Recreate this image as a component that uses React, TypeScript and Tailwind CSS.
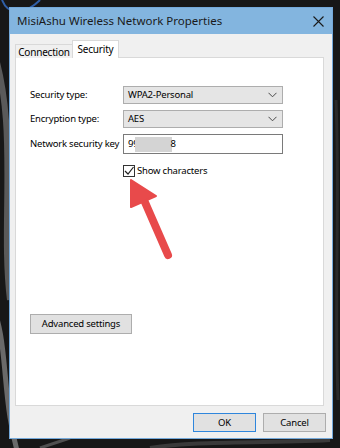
import React from "react";

const font = { fontFamily: '"Noto Sans", "Liberation Sans", sans-serif' };

function Chevron() {
  return (
    <svg width="9" height="6" viewBox="0 0 9 6" className="text-[#4a4a4a]">
      <path d="M0.5 0.8 L4.5 4.8 L8.5 0.8" fill="none" stroke="currentColor" strokeWidth="1" />
    </svg>
  );
}

function Select({ value }: { value: string }) {
  return (
    <div className="flex h-[18px] w-[160px] items-center justify-between border border-[#adadad] bg-[#e5e5e5] pl-[4px] pr-[5px]">
      <span>{value}</span>
      <Chevron />
    </div>
  );
}

function Row({ label, children }: { label: string; children: React.ReactNode }) {
  return (
    <div className="flex items-center">
      <span className="w-[93px] shrink-0 whitespace-nowrap">{label}</span>
      {children}
    </div>
  );
}

export default function App() {
  return (
    <div
      className="relative h-[448px] w-[340px] overflow-hidden bg-[#171717] text-[9.5px] leading-none tracking-[-0.2px] text-black"
      style={font}
    >
      {/* desktop wallpaper streaks */}
      <svg className="absolute inset-0" width="340" height="448" viewBox="0 0 340 448">
        <path d="M-10 40 C 20 120, 0 220, 10 300" stroke="#5a5a5a" strokeWidth="6" fill="none" />
        <path d="M-10 300 C 10 340, 0 400, 20 460" stroke="#6a6a6a" strokeWidth="5" fill="none" />
        <path d="M2 0 C 10 20, 30 10, 40 0" stroke="#2f5fa8" strokeWidth="2" fill="none" />
        <path d="M150 448 C 200 440, 260 444, 330 440" stroke="#3a3a3a" strokeWidth="4" fill="none" />
        <path d="M40 448 L 70 438" stroke="#505050" strokeWidth="3" fill="none" />
        <path d="M336 100 C 340 200, 334 300, 338 400" stroke="#2a2a2a" strokeWidth="3" fill="none" />
      </svg>

      {/* dialog window */}
      <div className="absolute left-[9px] top-[7px] flex h-[432px] w-[324px] flex-col border border-[#74a9da] bg-[#f0f0f0]">
        <div className="flex h-[26px] shrink-0 items-center justify-between bg-[#83b5df] pl-[7px] pr-[8px]">
          <span className="text-[11.5px] tracking-normal text-[#1a1a1a]">MisiAshu Wireless Network Properties</span>
          <svg width="11" height="11" viewBox="0 0 11 11">
            <path d="M0.5 0.5 L10.5 10.5 M10.5 0.5 L0.5 10.5" stroke="#1a1a1a" strokeWidth="1.1" />
          </svg>
        </div>

        <div className="flex flex-1 flex-col pl-[5px] pr-[8px] pt-[7px]">
          {/* tabs */}
          <div className="relative z-10 flex h-[17px] items-end">
            <div className="-mr-px flex h-[14px] w-[58px] items-center justify-center border border-b-0 border-[#d9d9d9] bg-[#f0f0f0] text-[10px]">
              Connection
            </div>
            <div className="flex h-[18px] w-[47px] items-center justify-center border border-b-0 border-[#d9d9d9] bg-white pb-[2px] text-[10px]">
              Security
            </div>
          </div>

          {/* panel */}
          <div className="-mt-px flex h-[349px] flex-col border border-[#d9d9d9] bg-white pl-[14px] pt-[28px]">
            <div className="flex flex-col gap-[6px]">
              <Row label="Security type:">
                <Select value="WPA2-Personal" />
              </Row>
              <Row label="Encryption type:">
                <Select value="AES" />
              </Row>
              <Row label="Network security key">
                <div className="flex h-[20px] w-[160px] items-center border border-[#7a7a7a] bg-white pl-[4px]">
                  <span>99</span>
                  <span className="-ml-[3px] -mr-[2px] inline-block h-[15px] w-[37px] bg-[#d4d4d4]" />
                  <span>8</span>
                </div>
              </Row>
            </div>

            <div className="ml-[93px] mt-[11px] flex items-center gap-[2px]">
              <div className="flex h-[12px] w-[12px] items-center justify-center border border-[#333] bg-white">
                <svg width="10" height="10" viewBox="0 0 10 10">
                  <path d="M1 5 L4 8 L9.5 1" fill="none" stroke="#222" strokeWidth="1.2" />
                </svg>
              </div>
              <span>Show characters</span>
            </div>

            <div className="mt-[137px] flex h-[20px] w-[102px] items-center justify-center border border-[#adadad] bg-[#e1e1e1]">
              Advanced settings
            </div>
          </div>

          {/* buttons */}
          <div className="mt-[7px] flex justify-end gap-[7px]">
            <div className="flex h-[19px] w-[63px] items-center justify-center border border-[#2f86dc] bg-[#e1e1e1]">
              OK
            </div>
            <div className="-mr-[2px] flex h-[19px] w-[63px] items-center justify-center border border-[#adadad] bg-[#e1e1e1]">
              Cancel
            </div>
          </div>
        </div>
      </div>

      {/* red annotation arrow */}
      <svg className="absolute inset-0" width="340" height="448" viewBox="0 0 340 448">
        <path d="M144 200 L168 255" stroke="#e84a4b" strokeWidth="8" strokeLinecap="round" />
        <path d="M131 180 L156 196 L131 207 Z" fill="#e84a4b" stroke="#e84a4b" strokeWidth="2" strokeLinejoin="round" />
      </svg>
    </div>
  );
}
